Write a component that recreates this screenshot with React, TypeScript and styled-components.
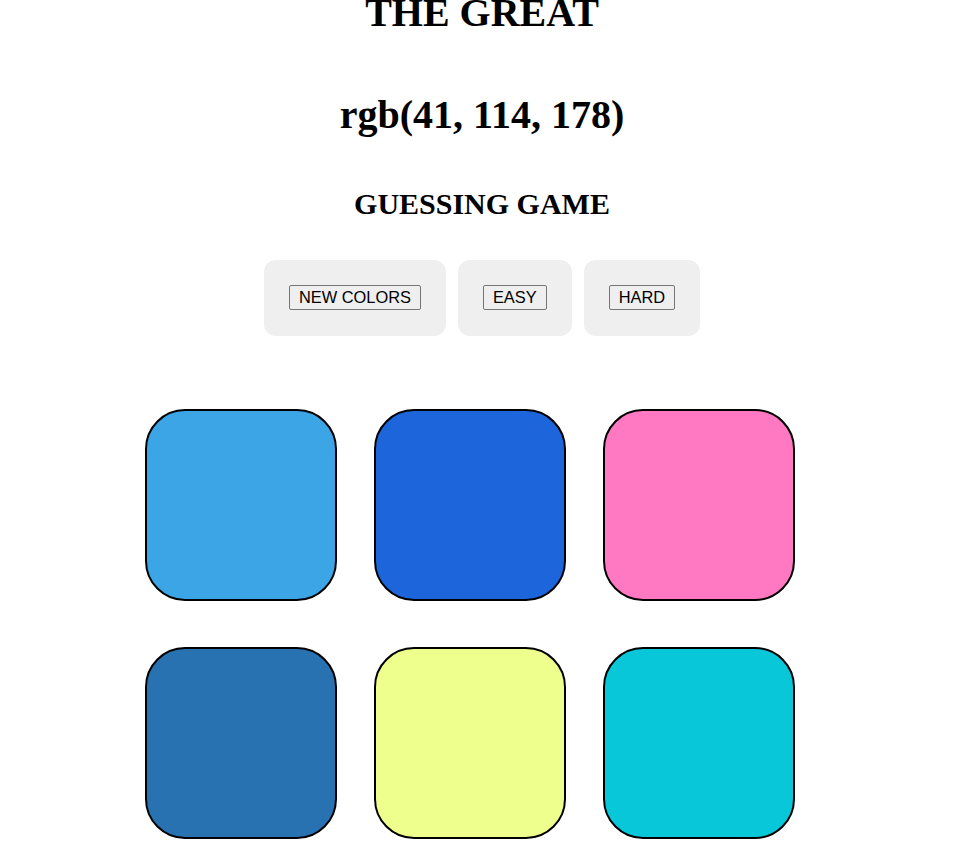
import React from "react";
import styled, { createGlobalStyle } from "styled-components";

const GlobalStyle = createGlobalStyle`
  html, body {
    margin: 0;
    padding: 0;
    background: #ffffff;
  }
  body {
    font-family: "Liberation Serif", "Times New Roman", serif;
    color: #000000;
  }
`;

const Page = styled.div`
  display: flex;
  flex-direction: column;
  align-items: center;
  padding-bottom: 40px;
`;

const Title = styled.h1`
  margin: -10px 0 0;
  font-family: "Liberation Serif", "Times New Roman", serif;
  font-size: 40px;
  line-height: 46px;
  font-weight: 700;
  text-align: center;
`;

const Target = styled.h1`
  margin: 56px 0 0;
  font-family: "Liberation Serif", "Times New Roman", serif;
  font-size: 40px;
  line-height: 46px;
  font-weight: 700;
  text-align: center;
`;

const Subtitle = styled.h2`
  margin: 49px 0 0;
  font-family: "Liberation Serif", "Times New Roman", serif;
  font-size: 30px;
  line-height: 34px;
  font-weight: 700;
  text-align: center;
`;

const Controls = styled.div`
  display: flex;
  gap: 12px;
  margin-top: 39px;
`;

const ControlBox = styled.div`
  display: flex;
  align-items: flex-start;
  padding: 25px 25px 26px;
  background: #efefef;
  border-radius: 12px;
`;

const Button = styled.button`
  box-sizing: border-box;
  height: 25px;
  padding: 0 9px;
  margin: 0;
  border: 1px solid #767676;
  border-radius: 2px;
  background: #efefef;
  color: #000000;
  font-family: "Liberation Sans", Arial, sans-serif;
  font-size: 16.4px;
  line-height: 23px;
  cursor: pointer;
`;

const Grid = styled.div`
  display: grid;
  grid-template-columns: repeat(3, 192px);
  column-gap: 37px;
  row-gap: 46px;
  margin-top: 73px;
  padding-right: 24px;
`;

const Square = styled.div<{ $color: string }>`
  box-sizing: border-box;
  width: 192px;
  height: 192px;
  border: 2px solid #000000;
  border-radius: 40px;
  background: ${(p) => p.$color};
`;

const colors = [
  "rgb(60, 165, 230)",
  "rgb(28, 101, 219)",
  "rgb(255, 120, 193)",
  "rgb(41, 114, 178)",
  "rgb(238, 255, 141)",
  "rgb(7, 199, 217)",
];

export default function App() {
  return (
    <>
      <GlobalStyle />
      <Page>
        <Title>THE GREAT</Title>
        <Target>rgb(41, 114, 178)</Target>
        <Subtitle>GUESSING GAME</Subtitle>
        <Controls>
          <ControlBox>
            <Button>NEW COLORS</Button>
          </ControlBox>
          <ControlBox>
            <Button>EASY</Button>
          </ControlBox>
          <ControlBox>
            <Button>HARD</Button>
          </ControlBox>
        </Controls>
        <Grid>
          {colors.map((c) => (
            <Square key={c} $color={c} />
          ))}
        </Grid>
      </Page>
    </>
  );
}
